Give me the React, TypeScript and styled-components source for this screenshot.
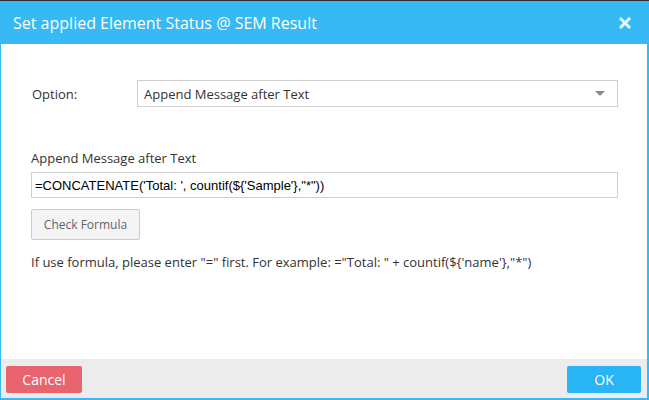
import React from "react";
import styled, { createGlobalStyle } from "styled-components";

const Global = createGlobalStyle`
  html, body { margin: 0; padding: 0; }
  body {
    background: #2e2e2e;
    font-family: "Open Sans", "Noto Sans", sans-serif;
    width: 649px;
    height: 400px;
    overflow: hidden;
  }
`;

const Dialog = styled.div`
  box-sizing: border-box;
  margin-top: 1px;
  width: 649px;
  height: 399px;
  display: flex;
  flex-direction: column;
  background: #fff;
  border-left: 1px solid #36b9f4;
  border-right: 2px solid #36b9f4;
  border-bottom: 2px solid #36b9f4;
`;

const Header = styled.div`
  height: 43px;
  flex: none;
  background: #36b9f4;
  display: flex;
  align-items: center;
  justify-content: space-between;
  padding: 0 16px 0 12px;
`;

const Title = styled.div`
  color: #fff;
  font-size: 16px;
`;

const Close = styled.button`
  border: none;
  background: none;
  padding: 0;
  width: 12px;
  height: 12px;
  display: flex;
  cursor: pointer;
`;

const Body = styled.div`
  flex: 1;
  padding: 36px 29px 0 30px;
  display: flex;
  flex-direction: column;
`;

const Row = styled.div`
  display: flex;
  align-items: center;
`;

const RowLabel = styled.div`
  width: 105px;
  padding-left: 1px;
  font-size: 13px;
  color: #333;
`;

const Select = styled.div`
  flex: 1;
  box-sizing: border-box;
  height: 27px;
  border: 1px solid #cfcfcf;
  display: flex;
  align-items: center;
  justify-content: space-between;
  padding: 0 12px 0 6px;
  font-size: 13px;
  color: #333;
`;

const Caret = styled.span`
  width: 0;
  height: 0;
  border-left: 5px solid transparent;
  border-right: 5px solid transparent;
  border-top: 5px solid #8a8a8a;
`;

const FieldLabel = styled.div`
  margin-top: 42px;
  font-size: 13px;
  color: #333;
  line-height: 18px;
`;

const Input = styled.input`
  margin-top: 5px;
  box-sizing: border-box;
  height: 26px;
  width: 100%;
  border: 1px solid #cfcfcf;
  padding: 0 3px;
  font-family: "Liberation Sans", Arial, sans-serif;
  font-size: 13px;
  color: #000;
  outline: none;
`;

const CheckButton = styled.button`
  margin-top: 11px;
  align-self: flex-start;
  box-sizing: border-box;
  width: 109px;
  height: 31px;
  background: #f4f4f4;
  border: 1px solid #cccccc;
  border-radius: 2px;
  font-family: "Open Sans", "Noto Sans", sans-serif;
  font-size: 12px;
  color: #666;
  padding: 0;
`;

const Hint = styled.div`
  margin-top: 13px;
  font-size: 13px;
  color: #333;
  line-height: 18px;
`;

const Footer = styled.div`
  height: 39px;
  flex: none;
  background: #ececec;
  display: flex;
  justify-content: space-between;
  align-items: flex-start;
  padding: 7px 6px 0 5px;
  box-sizing: border-box;
`;

const FooterButton = styled.button<{ $tone: "danger" | "primary"; $w: number }>`
  box-sizing: border-box;
  width: ${(p) => p.$w}px;
  height: 27px;
  border: none;
  border-radius: 2px;
  background: ${(p) => (p.$tone === "danger" ? "#e8646f" : "#29b4f6")};
  color: #fff;
  font-family: "Open Sans", "Noto Sans", sans-serif;
  font-size: 14px;
  padding: 0;
`;

export default function App() {
  return (
    <>
      <Global />
      <Dialog>
        <Header>
          <Title>Set applied Element Status @ SEM Result</Title>
          <Close aria-label="close">
            <svg width="12" height="12" viewBox="0 0 12 12">
              <path d="M2 2 L10 10 M10 2 L2 10" stroke="#e6f6fe" strokeWidth="3" strokeLinecap="square" />
            </svg>
          </Close>
        </Header>
        <Body>
          <Row>
            <RowLabel>Option:</RowLabel>
            <Select>
              <span>Append Message after Text</span>
              <Caret />
            </Select>
          </Row>
          <FieldLabel>Append Message after Text</FieldLabel>
          <Input readOnly value={`=CONCATENATE('Total: ', countif(\${'Sample'},"*"))`} />
          <CheckButton>Check Formula</CheckButton>
          <Hint>{`If use formula, please enter "=" first. For example: ="Total: " + countif(\${'name'},"*")`}</Hint>
        </Body>
        <Footer>
          <FooterButton $tone="danger" $w={76}>Cancel</FooterButton>
          <FooterButton $tone="primary" $w={74}>OK</FooterButton>
        </Footer>
      </Dialog>
    </>
  );
}
